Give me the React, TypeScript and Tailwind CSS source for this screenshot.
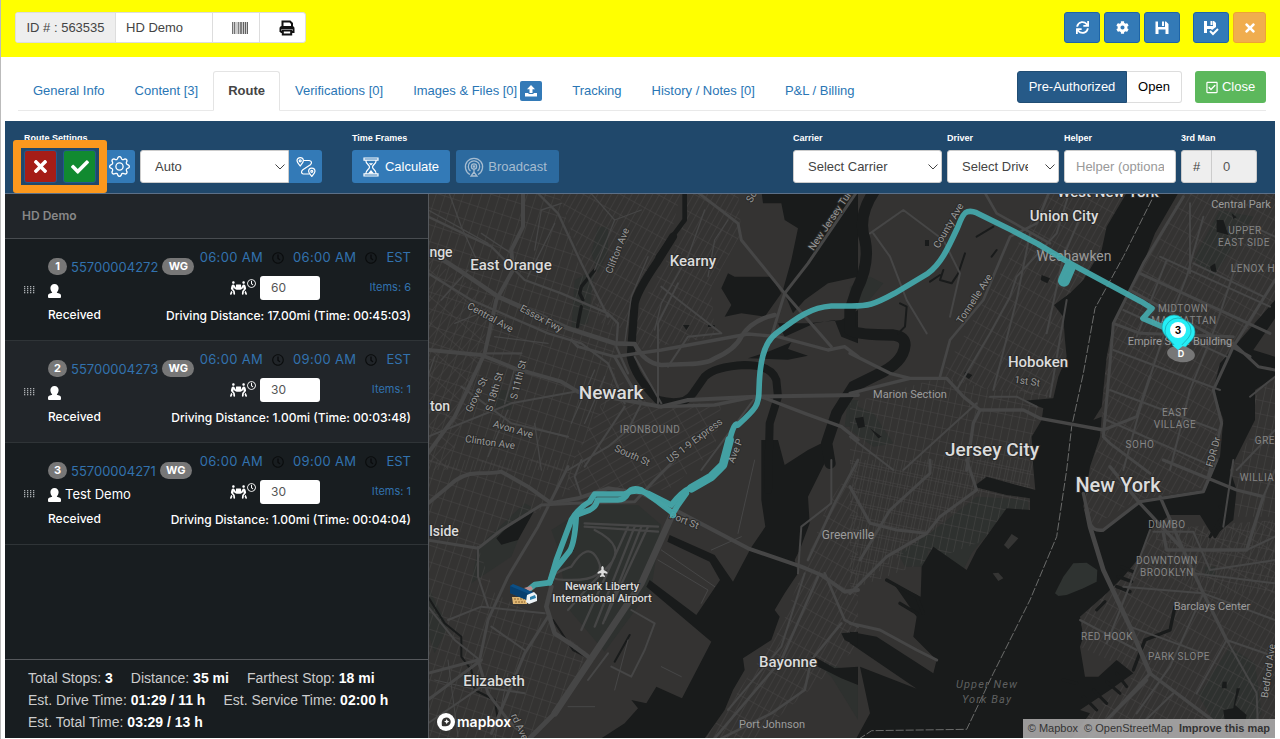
import { useState } from "react";
import type { ReactNode } from "react";
import { FaCheck, FaCog, FaPeopleCarry, FaPlane, FaRegCheckSquare, FaRegClock, FaSync, FaTimes } from "react-icons/fa";
import { BsGear } from "react-icons/bs";

const stops = [
  { n: 1, id: "55700004272", name: "", from: "06:00 AM", to: "06:00 AM", mins: "60", items: 6, drive: "17.00mi (Time: 00:45:03)" },
  { n: 2, id: "55700004273", name: "", from: "06:00 AM", to: "09:00 AM", mins: "30", items: 1, drive: "1.00mi (Time: 00:03:48)" },
  { n: 3, id: "55700004271", name: "Test Demo", from: "06:00 AM", to: "09:00 AM", mins: "30", items: 1, drive: "1.00mi (Time: 00:04:04)" },
];

const summary = [
  [["Total Stops:", "3"], ["Distance:", "35 mi"], ["Farthest Stop:", "18 mi"]],
  [["Est. Drive Time:", "01:29 / 11 h"], ["Est. Service Time:", "02:00 h"]],
  [["Est. Total Time:", "03:29 / 13 h"]],
];

/* ---------- icons ---------- */

function FloppyIcon(props: { check?: boolean }) {
  return (
    <svg className="h-4 w-4" viewBox="0 0 16 16" fill="currentColor">
      {props.check ? (
        <>
          <path d="M1 1h3v5h6V1h1l2 2v4L9 10 8 9H4v4H1z" />
          <path d="M7.500 1h2v4h-2z" />
          <path d="M7 11l3 3 5-5" fill="none" stroke="currentColor" strokeWidth="2" />
        </>
      ) : (
        <>
          <path d="M1.500 1.500H4V7h7V1.500h1l2.500 2.500v10h-3V9.500h-7v4.500h-3z" />
          <path d="M8 1.500h2V6H8z" />
        </>
      )}
    </svg>
  );
}

function BarcodeIcon() {
  return (
    <svg className="h-3 w-4" viewBox="0 0 16 12" fill="#333">
      <path d="M0 0h16v12H0z" opacity=".25" />
      <path d="M0 0h1v12H0zM2 0h1v12H2z" opacity=".6" />
      <path d="M6 0h1v12H6zM8 0h2v12H8z" opacity=".5" />
      <path d="M11 0h1v12h-1zM13 0h1v12h-1zM15 0h1v12h-1z" opacity=".7" />
    </svg>
  );
}

function PrinterIcon() {
  return (
    <svg className="h-4 w-4" viewBox="0 0 16 16" fill="none" stroke="#111" strokeWidth="2">
      <path d="M3.500 7V1.500h7.500l2 2V7" />
      <path d="M1.500 12V8.500Q1.500 7 3 7h10q1.500 0 1.500 1.500V12H12.500M3.500 12h-2" />
      <path d="M3.800 10.500h8.400v4H3.800z" />
      <path d="M2 8h12" />
    </svg>
  );
}

function UploadIcon() {
  return (
    <svg className="h-3 w-3" viewBox="0 0 12 12" fill="currentColor">
      <path d="M6 0l4 4.200H7.500V8h-3V4.200H2zM0 8h3.500v1h5V8H12v3.500H0z" />
    </svg>
  );
}

function RouteIcon() {
  return (
    <svg className="h-5 w-5" viewBox="0 0 20 20" fill="none" stroke="currentColor" strokeWidth="1.200">
      <path d="M4.200 9C2.200 6.500 1 5.200 1 3.800a3.200 3.200 0 016.400 0C7.400 5.200 6.200 6.500 4.200 9z" />
      <circle cx="4.200" cy="3.800" r="1" />
      <path d="M15.800 19.500c-2-2.500-3.200-3.800-3.200-5.200a3.200 3.200 0 016.400 0c0 1.400-1.200 2.700-3.200 5.200z" />
      <circle cx="15.800" cy="14.300" r="1" />
      <path d="M8 3.500h5.200c2.600.5 3 2.500 1.200 4.200l-7.600 5c-2 1.500-1.500 4 .5 4.300L13.500 17" />
    </svg>
  );
}

function HourglassIcon() {
  return (
    <svg className="h-5 w-4" viewBox="0 0 16 20" fill="none" stroke="currentColor" strokeWidth="1.200">
      <path d="M1 1h14v2.200H1zM1 16.800h14V19H1zM2.800 3.200c0 4 3.700 4.300 3.700 6.800s-3.700 2.800-3.700 6.800M13.200 3.200c0 4-3.700 4.300-3.700 6.800s3.700 2.800 3.700 6.800" />
      <path d="M5.800 6.200h4.400L8 8.500zM8 13l3 3.500H5z" fill="currentColor" stroke="none" />
    </svg>
  );
}

function PodcastIcon() {
  return (
    <svg className="h-5 w-5" viewBox="0 0 20 20" fill="none" stroke="currentColor" strokeWidth="1.300">
      <path d="M6 17.500a8.600 8.600 0 118 0" />
      <path d="M6.500 14a5.700 5.700 0 117 0" />
      <circle cx="10" cy="9.500" r="2.600" />
      <circle cx="10" cy="9.500" r=".7" fill="currentColor" />
      <path d="M10 12v3M10 15l-3 4h6z" />
    </svg>
  );
}

function UserIcon() {
  return (
    <svg className="h-[14px] w-[13px] shrink-0" viewBox="0 0 13 14" fill="#fff">
      <path d="M6.500 0C9 0 10.600 1.700 10.600 4c0 1.900-.8 3.300-1.700 4.200v.6l3 1q1.100.5 1.100 1.600v1.600q0 1-1 1H1q-1 0-1-1v-1.600Q0 10.300 1.100 9.800l3-1v-.6C3.200 7.300 2.400 5.900 2.400 4 2.400 1.700 4 0 6.500 0z" />
    </svg>
  );
}

function GripIcon() {
  return (
    <svg className="h-2 w-[11px] shrink-0" viewBox="0 0 11 8" fill="#a9adb0">
      {[0, 3, 6, 9].map((x) => [0, 2, 4, 6].map((y) => <rect key={`${x}-${y}`} x={x} y={y} width="1.300" height="1.300" />))}
    </svg>
  );
}

/* ---------- top of the page ---------- */

function HeaderButton(props: { label: string; warning?: boolean; children: ReactNode }) {
  return (
    <button
      aria-label={props.label}
      className={`flex h-[31px] items-center justify-center rounded-[3px] border text-white ${
        props.warning ? "w-[33px] border-[#eea236] bg-[#f0ad4e]" : "w-9 border-[#1d64a8] bg-[#337ab7]"
      }`}
    >
      {props.children}
    </button>
  );
}

function Header() {
  return (
    <header className="flex h-[57px] items-center justify-between bg-[#ffff00] px-[14px] pb-[2px]">
      <div className="flex h-[31px] items-center overflow-hidden rounded-[3px] border border-[#ddd] bg-white text-[#444]">
        <label htmlFor="order-name" className="flex h-full w-[100px] items-center justify-center border-r border-[#ddd] bg-[#eee]">
          ID # : 563535
        </label>
        <input id="order-name" defaultValue="HD Demo" className="h-full w-[97px] border-r border-[#ddd] px-[10px]" />
        <button aria-label="Barcode" className="flex h-full w-[47px] items-center justify-center border-r border-[#ddd] pl-2">
          <BarcodeIcon />
        </button>
        <button aria-label="Print" className="flex h-full w-[45px] items-center justify-center pl-2">
          <PrinterIcon />
        </button>
      </div>
      <div className="flex gap-[13px]">
        <div className="flex gap-1">
          <HeaderButton label="Refresh"><FaSync className="h-[13px] w-[13px]" /></HeaderButton>
          <HeaderButton label="Settings"><FaCog className="h-[13px] w-[13px]" /></HeaderButton>
          <HeaderButton label="Save"><FloppyIcon /></HeaderButton>
        </div>
        <div className="flex gap-1">
          <HeaderButton label="Save and close"><FloppyIcon check /></HeaderButton>
          <HeaderButton label="Cancel" warning><FaTimes className="h-[14px] w-[14px]" /></HeaderButton>
        </div>
      </div>
    </header>
  );
}

function Tab(props: { label: string; active?: boolean; onSelect: () => void; children?: ReactNode }) {
  return (
    <a
      href="#"
      onClick={props.onSelect}
      className={`-mb-px flex h-[40px] items-center gap-[3px] rounded-t-[3px] border px-[14px] ${
        props.active ? "border-[#e4e4e4] border-b-white bg-white font-bold text-[#444]" : "border-transparent text-[#2a76b5]"
      }`}
    >
      {props.label}
      {props.children}
    </a>
  );
}

const tabs = [
  "General Info",
  "Content [3]",
  "Route",
  "Verifications [0]",
  "Images & Files [0]",
  "Tracking",
  "History / Notes [0]",
  "P&L / Billing",
];

function TabBar() {
  const [active, setActive] = useState("Route");

  return (
    <div className="flex justify-between pt-[14px] pr-[14px] pl-[17px]">
      <nav className="flex flex-1 border-b border-[#e9e9e9]">
        {tabs.map((tab) => (
          <Tab key={tab} label={tab} active={tab === active} onSelect={() => setActive(tab)}>
            {tab.startsWith("Images") && (
              <span className="flex h-5 w-[22px] items-center justify-center rounded-[2px] bg-[#337ab7] text-white">
                <UploadIcon />
              </span>
            )}
          </Tab>
        ))}
      </nav>
      <div className="flex gap-[13px] border-b border-[#e9e9e9] pb-[7px]">
        <div className="flex h-8">
          <button className="w-[110px] rounded-l-[3px] border border-[#204d74] bg-[#265a88] text-white">Pre-Authorized</button>
          <button className="w-[55px] rounded-r-[3px] border border-l-0 border-[#ddd] text-black">Open</button>
        </div>
        <button className="flex h-8 w-[71px] items-center justify-center gap-1 rounded-[3px] bg-[#5cb85c] text-white">
          <FaRegCheckSquare className="h-[13px] w-3" />
          Close
        </button>
      </div>
    </div>
  );
}

/* ---------- route toolbar ---------- */

function Field(props: { label: string; htmlFor?: string; children: ReactNode }) {
  return (
    <div className="flex flex-col gap-[6px]">
      <label htmlFor={props.htmlFor} className="text-[9px] leading-3 font-bold text-white">
        {props.label}
      </label>
      <div className="flex">{props.children}</div>
    </div>
  );
}

function Dropdown(props: { id: string; value: string; className: string }) {
  return (
    <div className={`relative ${props.className}`}>
      <select id={props.id} className="h-[33px] w-full appearance-none rounded-[inherit] border border-[#ccc] bg-white pr-[30px] pl-[14px] text-[#444]">
        <option>{props.value}</option>
      </select>
      <svg className="pointer-events-none absolute top-[14px] right-1 h-[6px] w-[10px]" viewBox="0 0 10 6" fill="none" stroke="#444">
        <path d="M.500.500L5 5 9.500.500" />
      </svg>
    </div>
  );
}

function Toolbar() {
  return (
    <div className="mt-[10px] mr-[5px] ml-1 flex h-[73px] items-start border-b border-[#5c7088] bg-[#20486b] pt-[11px] pr-[18px] pl-[19px]">
      <Field label="Route Settings" htmlFor="mode">
        <div className="relative mr-1 flex gap-[6px]">
          <button aria-label="Discard" className="flex h-[33px] w-[33px] items-center justify-center rounded-[3px] border border-[#23588c] bg-[#a51d17] text-white">
            <FaTimes className="h-[19px] w-[19px]" />
          </button>
          <button aria-label="Apply" className="flex h-[33px] w-[33px] items-center justify-center rounded-[3px] border border-[#23588c] bg-[#118a30] text-white">
            <FaCheck className="h-[18px] w-[18px]" />
          </button>
          <div className="pointer-events-none absolute -inset-x-[11px] -inset-y-[10px] z-10 rounded-[3px] border-8 border-[#fc981d]" />
        </div>
        <button aria-label="Route settings" className="mr-[5px] flex h-[33px] w-[35px] items-center justify-center rounded-r-[3px] bg-[#337ab7] pl-1 text-white">
          <BsGear className="h-[21px] w-[21px]" />
        </button>
        <Dropdown id="mode" value="Auto" className="w-[149px] rounded-l-[3px]" />
        <button aria-label="Optimize route" className="flex h-[33px] w-[33px] items-center justify-center rounded-r-[3px] bg-[#337ab7] text-white">
          <RouteIcon />
        </button>
      </Field>
      <div className="ml-[30px] flex-1">
        <Field label="Time Frames">
          <button className="mr-[6px] flex h-[33px] w-[98px] items-center justify-center gap-[6px] rounded-[3px] bg-[#337ab7] text-white">
            <HourglassIcon />
            Calculate
          </button>
          <button disabled className="flex h-[33px] w-[103px] items-center justify-center gap-1 rounded-[3px] bg-[#2c6a9f] pr-1 text-[#a6bcd0]">
            <PodcastIcon />
            Broadcast
          </button>
        </Field>
      </div>
      <div className="flex gap-[5px]">
        <Field label="Carrier" htmlFor="carrier">
          <Dropdown id="carrier" value="Select Carrier" className="w-[149px] rounded-[3px]" />
        </Field>
        <Field label="Driver" htmlFor="driver">
          <Dropdown id="driver" value="Select Driver" className="w-[112px] rounded-[3px]" />
        </Field>
        <Field label="Helper" htmlFor="helper">
          <input id="helper" placeholder="Helper (optional)" className="h-[33px] w-[112px] rounded-[3px] border border-[#ccc] bg-white px-[11px] placeholder:text-[#999]" />
        </Field>
        <Field label="3rd Man" htmlFor="third">
          <span className="flex h-[33px] w-[31px] items-center justify-center rounded-l-[3px] border border-[#ccc] bg-[#eee] text-[#444]">#</span>
          <input id="third" defaultValue="0" className="h-[33px] w-[45px] rounded-r-[3px] border border-l-0 border-[#ccc] bg-[#eee] px-[11px] text-[#555]" />
        </Field>
      </div>
    </div>
  );
}

/* ---------- stops ---------- */

function StopRow(props: { stop: (typeof stops)[number] }) {
  const { stop } = props;
  return (
    <li className={`flex h-[102px] items-center border-b border-[#2f3437] pr-[17px] pl-[19px] ${stop.n === 2 ? "bg-[#212529]" : "bg-[#181d20]"}`}>
      <GripIcon />
      <div className="ml-[13px] flex w-[100px] flex-col gap-[6px] text-white">
        <div className="flex items-center gap-1 whitespace-nowrap">
          <span className="flex h-[17px] w-[19px] shrink-0 items-center justify-center rounded-full bg-[#777] text-[11px] font-bold">{stop.n}</span>
          <a href="#" className="text-[13px] leading-5 text-[#3272ae]">{stop.id}</a>
          <span className="flex h-[17px] w-8 shrink-0 items-center justify-center rounded-full bg-[#777] text-[11px] font-bold">WG</span>
        </div>
        <div className="flex h-4 items-center gap-1 whitespace-nowrap">
          <UserIcon />
          {stop.name}
        </div>
        <div className="mt-[2px] text-[12px] leading-4 font-medium">Received</div>
      </div>
      <div className="flex flex-1 flex-col items-end pb-2 text-[#3272ae]">
        <div className="flex h-5 items-center gap-[9px] text-[13px] whitespace-nowrap">
          <a href="#" className="tracking-wide">{stop.from}</a>
          <FaRegClock className="h-3 w-3 text-[#0a0c0d]" />
          <a href="#" className="tracking-wide">{stop.to}</a>
          <FaRegClock className="h-3 w-3 text-[#0a0c0d]" />
          <span>EST</span>
        </div>
        <div className="mt-2 flex h-6 items-center">
          <FaPeopleCarry className="h-4 w-[17px] text-white" />
          <FaRegClock className="mb-2 h-[9px] w-[9px] text-white" />
          <input aria-label="Service minutes" defaultValue={stop.mins} className="ml-1 h-6 w-[60px] rounded-[3px] bg-white px-[11px] text-[12px] text-[#555]" />
          <span className="w-[91px] text-right text-[11px]">Items: {stop.items}</span>
        </div>
        <div className="mt-2 text-[12px] leading-4 font-medium whitespace-nowrap text-white">Driving Distance: {stop.drive}</div>
      </div>
    </li>
  );
}

function StopsPanel() {
  return (
    <section className="flex w-[424px] shrink-0 flex-col border-r border-[#55585c] bg-[#181d20]">
      <h2 className="flex h-[45px] items-center border-b border-[#484c50] bg-[#212529] pl-[17px] font-[Inter,sans-serif] text-[12px] font-semibold text-[#888]">
        HD Demo
      </h2>
      <ul className="flex-1 font-[Inter,sans-serif] text-[13px]">
        {stops.map((stop) => (
          <StopRow key={stop.n} stop={stop} />
        ))}
      </ul>
      <div className="border-t border-[#55585c] pt-[7px] pb-[5px] pl-[23px] text-[14px] leading-[22px] text-[#ccc]">
        {summary.map((line, i) => (
          <p key={i} className="flex gap-[18px]">
            {line.map(([label, value]) => (
              <span key={label}>
                {label} <b className="text-white">{value}</b>
              </span>
            ))}
          </p>
        ))}
      </div>
    </section>
  );
}

/* ---------- map ---------- */

// Every tile is drawn at three units per pixel.
const NW = "translate(0 0)";
const NE = "translate(1266 0)";
const SW = "translate(0 810)";
const SE = "translate(1266 810)";

const grids = [
  { id: "a", angle: 18, w: 26, h: 48 },
  { id: "b", angle: 29, w: 18, h: 54 },
  { id: "c", angle: 40, w: 24, h: 60 },
  { id: "d", angle: 12, w: 22, h: 40 },
  { id: "e", angle: 60, w: 24, h: 62 },
];

const blocks = [
  { at: NW, grid: "a", d: "M0 0H390L460 250 560 400 560 600 420 840H0z" },
  { at: NW, grid: "c", d: "M0 200L190 330 160 500 60 840H0z" },
  { at: NW, grid: "b", d: "M390 0H760L730 130 610 320 600 420 520 400z" },
  { at: NW, grid: "b", d: "M770 0H930L940 130 850 290 860 440 620 480 620 380 760 130z" },
  { at: NW, grid: "e", d: "M420 840L560 560 620 600 680 640 880 640 860 780 720 900 420 900z" },
  { at: NE, grid: "b", d: "M480 200L600 0H830L700 280 640 360 640 480 600 620 420 600 270 560z" },
  { at: NE, grid: "d", d: "M420 600L610 600 560 660 545 1000 0 1200V640L280 560z" },
  { at: NE, grid: "b", d: "M1000 0H1275V340L1160 450 1100 560 1120 700 1070 890 860 930 710 1020 690 950 750 740 775 420 900 190z" },
  { at: NE, grid: "d", d: "M1275 560L1215 620 1200 740 1140 850 1150 980H1275z" },
  { at: SW, grid: "a", d: "M0 0H470L420 100 150 260 200 400 350 480 480 580 380 770 300 835H0z" },
  { at: SW, grid: "b", d: "M1290 0L1200 130 1060 500 900 740 830 835H980L1290 560z" },
  { at: SE, grid: "d", d: "M0 0H540V90L370 100 240 220 0 400z" },
  { at: SE, grid: "b", d: "M900 210L1275 180V835H640L860 640 690 560 690 470z" },
  { at: SE, grid: "d", d: "M900 210L1275 180V400L1030 400z" },
];

const parks = [
  { at: NW, d: "M510 110l30 0 0 80-30 60-20-60zM440 270l60-30-20 160-50 20zM200 600h50v60h-50zM1260 630h30v80h-40z" },
  { at: NE, d: "M0 290l60-30 40 20-50 60H0zM1110 60l100 20-120 180-60-50zM0 640l70 30 60 90-60 10L0 720z" },
  { at: SW, d: "M150 260l140-130 20 10-60 150-120 80zM370 210l120-75 140 0 70 60-30 190-140 190-110-130-30-180zM0 380l60 120-40 80-20-60zM1160 600l130 40v140l-80-130z" },
  { at: SE, d: "M240 220l140-110 155 10 0 35-80 15-90 110-30 60-60-50-40-20-10 50-60 0-20-40z" },
  { at: SE, d: "M1140 560l75 50 20 150-50 75-70-10-70-120zM1065 320h30v30h-30z" },
];

const water = [
  // Hudson, Upper Bay and East River
  {
    at: NE,
    d: "M835 0L770 110 755 180 700 270 660 310 612 345 640 380 645 450 650 500 625 560 610 625 520 632 580 655 575 690 545 740 548 810 556 900 500 885 410 860 370 890 470 915 540 925 540 960 470 955 380 1080 350 1140 250 1070 215 1130 212 1220 130 1180 200 1280 190 1340 260 1410 250 1450 80 1340 0 1325V1360L220 1510 210 1500 30 1430 60 1570 0 1680H640L720 1570 690 1560 780 1500 850 1450 800 1410 745 1460 705 1460 690 1370 700 1340 690 1280 770 1210 820 1160 870 1100 900 1020 960 975 1050 975 1090 1040 1150 990 1160 900 1140 840 1180 760 1215 690 1215 600 1275 560V500L1210 480 1275 385V330L1170 450 1110 520 1090 600 1120 690 1110 800 1060 900 870 930 760 1025 725 1020 700 950 720 830 750 740 755 680 730 690 755 650 770 500 790 400 840 310 880 220 915 130 990 0z",
  },
  // Newark Bay
  {
    at: SW,
    d: "M1000-60V0L1000 120 1012 200 970 262 915 365 860 285 725 225 718 245 845 305 876 360 805 465 665 360 655 380 850 545 762 715 685 680 655 730 610 720 630 745 590 790 520 835H830L890 750 915 690 950 630 945 595 1030 540 1055 470 1040 450 1070 400 1110 340 1100 300 1115 270 1145 190 1140 110 1190 10 1200-60 1140-30 1070 15 1050-60z",
  },
  { at: NW, d: "M1000 0H1290V260L1200 280 1130 330 1095 370 1065 300 1090 210 1110 115 1070 90 1060 40 1005 40z" },
  { at: NW, d: "M900 250l20 10 110 0 30 50-50 70-70-10-50 10 20-35-30-50zM960 505l60-20 70-28-10 20 60 20-60 12zM1050 400l90 0 100-10 50-30v100l-50-20-20-50-60 10-90 40zM765 405h20l-10 15zM840 405h20v6h-20z" },
  { at: SW, d: "M205 235l40-40 75-45-50 90-50 14zM1150 585l70 40 70-5v55l-50-20-80-40zM1240 520l50-5v45l-40-20z" },
  { at: NE, d: "M1100 90l20 0 15 45-35-10zM1145 70l15 12-10 5zM1080 230l15-10 5 25-15 0zM575 255l25 10-8 15-20-10zM345 545l22 10-10 12-15-10zM225 150h12v18h-12zM40 680l-25 5 10 30 20-5zM60 715l35 25-10 5z" },
  { at: SE, d: "M1118 665l12 0 0 20-15 0zM1120 750l30-5 10-60 10 0-15 50 35 30-10 45-50 15z" },
];

const rivers = [
  { at: NW, w: 14, d: "M770 0V90L740 130 690 200" },
  { at: NW, w: 24, d: "M735 140L685 220Q630 300 620 340L608 500Q620 560 690 630Q770 650 795 610L830 560Q860 530 950 525Q1030 525 1045 570L1050 620 1025 700 1020 900" },
  { at: NE, w: 34, d: "M75 0Q20 80 45 150Q60 220 20 300L0 360V420Q20 435 130 435 165 440 165 465 160 520 80 555L10 590-40 670-70 760-60 820" },
  { at: NW, w: 10, d: "M500 240L460 290 455 310 465 330M460 350L448 410" },
  { at: NE, w: 6, d: "M430 110l-50 30M440 180l-15 20M280 240l-10 30 35 10 20-30 20-60M240 275l30-20M150 340l20 10-5 60-20 20" },
  { at: SW, w: 6, d: "M0 410l50 80 50 40 0 60 30 40 10 60 60 30 10 60M445 180l-10 90M375 480l60 90 60 30M605 525l-45 80" },
  { at: SE, w: 10, d: "M850 630L885 540 960 510 975 440M800 380l40 15M805 350l40 15M815 320l35 15M640 660l40 10M110 360l90 50 20 50M150 430l50 30" },
  { at: SE, w: 9, d: "M700 710l40 40M730 690l40 40M770 665l40 35M800 640l30 40M1080 230l30-50M1095 230l30-50M1110 140l20 30M740 450l25-25" },
];

const roads = [
  { at: NW, w: 14, d: "M0 180L100 245 210 320 300 360 420 415 560 460 620 462Q650 520 700 525L780 522Q840 520 860 505Q920 480 940 440 970 390 1040 375" },
  { at: NW, w: 12, d: "M285 0L285 110 250 180 255 240 205 330 170 490 80 680 0 790M0 480L160 495 260 535 400 575 450 605 700 650 780 630 980 620 1290 615" },
  { at: NW, w: 10, d: "M700 650L860 645 980 620M1000 620L1130 670 1240 710 1290 750M560 500L700 480 960 432 1050 440 1200 480 1250 470 1290 500" },
  { at: NW, w: 9, d: "M1290 0L1140 220 1070 310 1030 440M800 0L930 100 940 150 1070 310 1210 470M430 450L450 470 560 500 640 640" },
  { at: NW, w: 7, d: "M0 80L190 170 290 270 400 310 540 370 570 400 565 470 600 550M0 250L130 330 360 430M320 0L390 70 460 220 540 380M280 490L170 490M360 430L460 460 540 520 590 640" },
  { at: NW, w: 6, d: "M0 740L250 640 440 605M100 590L250 700 420 740M640 640L600 720 540 770 420 840M590 650L470 830M720 530L780 440 880 430 700 290M690 640V400L750 280M620 500L700 640M820 840L980 625" },
  { at: NW, w: 4, d: "M0 60L180 160M60 0L100 110 160 240M320 180L340 60 400 40M250 190L160 130M380 100L300 260M480 0L560 90 640 60M560 90L500 240M660 200L610 320 590 460M830 60L780 200 700 340 680 420M900 90L860 150 840 260M20 500L0 560M200 440L360 460M260 535L230 640M320 700L340 840M180 800L240 660M500 540L430 700M530 560L470 700M40 330L120 240M80 400L180 360" },
  { at: NE, w: 10, d: "M0 490L120 550 180 565 290 565 340 620 390 660 520 660 570 685 760 720M0 610L180 565M390 660L370 700 350 840" },
  { at: NE, w: 8, d: "M600 0L560 100 480 140 400 330 300 450 270 560M400 0L440 70 600 160" },
  { at: NE, w: 6, d: "M60 130L160 60 280 150 330 250 300 380M70 130L120 200 170 330 230 430M660 0L620 130 500 260 480 320 420 430 320 600M540 130L500 330 430 600M700 60L640 200 590 430M420 620L500 620 560 650M160 840L380 640M0 740L130 840M650 330L600 620" },
  { at: NE, w: 9, d: "M1000 20L880 220 790 400 780 520 760 740 780 760 900 850M790 400L870 430 1150 440M840 300L1200 500M870 250L1260 430M760 720L860 680 900 560M1275 270L1150 470 1090 600 1115 700 1075 860M1150 460L1225 530 1275 540" },
  { at: NE, w: 6, d: "M1020 40V250M1060 80L1010 260 940 440 880 620 820 840M1160 220L1100 400 1020 600 960 840M930 200L1260 350M820 360L1130 500M790 480L1110 600M780 600L1100 720M770 690L1090 830M1210 110L1275 140M1030 220L1240 320M950 210L860 440M1200 620L1275 560M1275 720L1160 840" },
  { at: SW, w: 12, d: "M0 130L60 80Q100 40 150 40T220 35L300 80 370 130 450 115 540 85 640 100 750 155 960 265 1120 320 1180 345 1250 395 1290 390" },
  { at: SW, w: 20, d: "M730 170L640 370 540 520 480 610 380 760" },
  { at: SW, w: 14, d: "M370 380L355 440 380 520 440 560 480 590M380 760L330 810 300 840" },
  { at: SW, w: 9, d: "M0 240L150 265 220 210 340 135 440 130 620 125 680 60 740 0M360 470L290 580 190 820M155 600L180 480 240 350 330 200 420 20M0 640L150 600 180 700 240 780 300 840M0 720L160 600" },
  { at: SW, w: 6, d: "M0 440L80 540 155 600M60 480L160 440 350 460M190 500L290 570M460 0L440 50 460 110M0 790L160 680 290 700M150 260V350L180 440M610 450L680 490 650 570 610 650 550 620M480 660L540 580M1110 340L1120 200 1210 130 1210 0M1130 340L1060 560 900 750" },
  { at: SW, w: 3, d: "M700 270L860 380M930 220L980 0M690 300L840 390 820 430M850 270L940 230M600 540L560 690M700 620L760 650M20 660L150 690M60 600L90 830M240 640L200 840M500 740L420 740" },
  { at: SW, w: 7, d: "M470 200L690 215M470 190L690 200M620 200L500 500M640 200L525 490M600 200L460 510M660 200L530 480M430 320Q480 240 510 300T430 360 430 320M500 210Q600 260 540 320T420 450" },
  { at: SW, w: 8, d: "M1190 340L1250 480 1290 500M1240 490L1150 600 1130 690 1030 760 880 835M1290 0L1220 130 1140 300M1170 350L1060 600 860 835" },
  { at: SE, w: 9, d: "M350 0L380 90 270 170 230 220 110 290 0 400M0 80L60 190 140 210 230 220M240 0V40L120 150 30 300M0 490L90 510 200 570 260 600" },
  { at: SE, w: 14, d: "M710 150L720 200 760 330 840 500 900 640" },
  { at: SE, w: 10, d: "M700 100L720 190Q730 215 760 210L870 125 1060 95 1100 0M780 20L870 130 1000 270M930 110L1000 270 1060 400 1130 540M940 0L1160 90 1240 110 1190 270 950 270 940 220M900 640L1100 790 1180 835M900 640L720 835M890 660L690 860" },
  { at: SE, w: 6, d: "M1000 270L1190 270 1275 230M910 215L1030 215 1080 330 1275 300M820 380L1060 400 1275 480M900 210L830 400 770 550M840 500L1060 580M1130 540L1220 700 1225 835M1130 540L1275 590M1130 540L1040 700M1240 110L1275 30M1030 340L1275 370M1060 400L960 620 860 760M690 480L860 570M1120 200L1150 0M970 700L830 835" },
];

const routeStrands = [
  "M305 1196L320 1184 365 1178 385 1110 430 990Q450 955 485 935L500 912H590Q620 895 660 910L730 945Q760 905 790 892T850 860 885 825 905 750 930 705C985 655 993 645 993 600C995 520 1005 460 1045 430C1110 380 1150 352 1210 348H1270C1320 348 1336 345 1400 310L1500 250C1540 220 1560 175 1590 110Q1605 68 1618 65T1645 68L1750 120 1830 162 1930 222 2140 335 2172 355 2145 385 2215 415",
  "M365 1178L380 1140 420 1090Q440 1070 445 975L485 960Q505 950 508 930H570Q590 930 600 910T640 900L690 935 735 970 750 945 775 910",
];

const cities = [
  { t: "East Orange", x: 511, y: 270, s: 15 },
  { t: "Kearny", x: 693, y: 266, s: 15 },
  { t: "Newark", x: 611, y: 399, s: 19 },
  { t: "Union City", x: 1064, y: 221, s: 15 },
  { t: "West New York", x: 1108, y: 197, s: 15 },
  { t: "Hoboken", x: 1038, y: 367, s: 15 },
  { t: "Jersey City", x: 992, y: 456, s: 19 },
  { t: "New York", x: 1118, y: 492, s: 20 },
  { t: "Bayonne", x: 788, y: 667, s: 15 },
  { t: "Elizabeth", x: 494, y: 686, s: 15 },
  { t: "nge", x: 441, y: 257, s: 14 },
  { t: "ton", x: 440, y: 411, s: 14 },
  { t: "lside", x: 444, y: 536, s: 14 },
];

const places = [
  { t: "Weehawken", x: 1074, y: 261, s: 14 },
  { t: "Central Park", x: 1241, y: 208, s: 11 },
  { t: "Marion Section", x: 910, y: 398, s: 11 },
  { t: "Greenville", x: 848, y: 539, s: 12 },
  { t: "Port Johnson", x: 772, y: 728, s: 11 },
  { t: "Barclays Center", x: 1212, y: 610, s: 11 },
  { t: "Empire State Building", x: 1180, y: 345, s: 11 },
];

const districts = [
  { t: "IRONBOUND", x: 650, y: 433 },
  { t: "UPPER", x: 1245, y: 234 },
  { t: "EAST SIDE", x: 1244, y: 246 },
  { t: "LENOX H", x: 1253, y: 272 },
  { t: "MIDTOWN", x: 1183, y: 312 },
  { t: "MANHATTAN", x: 1184, y: 324 },
  { t: "EAST", x: 1175, y: 416 },
  { t: "VILLAGE", x: 1175, y: 428 },
  { t: "SOHO", x: 1140, y: 448 },
  { t: "GREE", x: 1268, y: 444 },
  { t: "WILLIA", x: 1257, y: 481 },
  { t: "DUMBO", x: 1167, y: 528 },
  { t: "DOWNTOWN", x: 1167, y: 564 },
  { t: "BROOKLYN", x: 1167, y: 576 },
  { t: "RED HOOK", x: 1107, y: 640 },
  { t: "PARK SLOPE", x: 1179, y: 660 },
];

const streets = [
  { t: "Clifton Ave", x: 618, y: 251, r: -68 },
  { t: "Central Ave", x: 490, y: 318, r: 29 },
  { t: "Essex Fwy", x: 541, y: 319, r: 28 },
  { t: "Grove St", x: 477, y: 395, r: -64 },
  { t: "S 18th St", x: 495, y: 392, r: -74 },
  { t: "S 11th St", x: 519, y: 380, r: -76 },
  { t: "Avon Ave", x: 513, y: 430, r: 16 },
  { t: "Clinton Ave", x: 490, y: 443, r: 8 },
  { t: "South St", x: 632, y: 456, r: 24 },
  { t: "US 1-9 Express", x: 695, y: 441, r: -37 },
  { t: "Ave P", x: 736, y: 451, r: -68 },
  { t: "New Jersey Turn", x: 832, y: 219, r: -56 },
  { t: "Sc", x: 752, y: 197, r: -60 },
  { t: "County Ave", x: 949, y: 226, r: -60 },
  { t: "Tonnelle Ave", x: 975, y: 299, r: -57 },
  { t: "1st St", x: 1027, y: 382, r: 8 },
  { t: "Port St", x: 684, y: 521, r: 22 },
  { t: "FDR Dr", x: 1214, y: 452, r: -75 },
  { t: "rd Ave", x: 519, y: 727, r: 65 },
  { t: "Bedford Ave", x: 1269, y: 671, r: -82 },
];

function Labels() {
  return (
    <g textAnchor="middle" className="font-[Roboto,sans-serif]">
      <g fill="#999" fontSize="10" stroke="#2b2b2a" strokeWidth="2" paintOrder="stroke">
        {streets.map((l) => (
          <text key={l.t} x={l.x} y={l.y} transform={`rotate(${l.r} ${l.x} ${l.y})`} dominantBaseline="middle">{l.t}</text>
        ))}
      </g>
      <g fill="#858585" className="text-[10px] tracking-wider">
        {districts.map((l) => (
          <text key={l.t} x={l.x} y={l.y}>{l.t}</text>
        ))}
        <g className="tracking-widest italic" fill="#5f6060" fontSize="11">
          <text x="987" y="688">Upper New</text>
          <text x="987" y="703">York Bay</text>
        </g>
      </g>
      <g fill="#9c9c9c">
        {places.map((l) => (
          <text key={l.t} x={l.x} y={l.y} fontSize={l.s}>{l.t}</text>
        ))}
      </g>
      <g fill="#dcdcdc" fontWeight="500" stroke="#2b2b2a" strokeWidth="2" paintOrder="stroke">
        {cities.map((l) => (
          <text key={l.t} x={l.x} y={l.y} fontSize={l.s}>{l.t}</text>
        ))}
        <text x="602" y="590" fontSize="11">Newark Liberty</text>
        <text x="602" y="602" fontSize="11">International Airport</text>
      </g>
    </g>
  );
}

function Markers() {
  return (
    <>
      <g transform="translate(509 584)">
        <path d="M3 13h15v7H4z" fill="#dfb673" />
        <path d="M5 15h10M6 18h10" stroke="#8a6330" strokeWidth="1" strokeDasharray="2 1" />
        <path d="M1 2L4 0 24 8V16L20 17 1 9z" fill="#0b4f86" />
        <path d="M1 2L20 10V17L1 9z" fill="#083f6e" />
        <path d="M18 11l7-3 3 3v6l-8 3-3-2z" fill="#eef3f6" />
        <path d="M21 13l5-2 1 3-6 2z" fill="#2d82ad" />
        <path d="M15 4l7-2 2 3-3 2z" fill="#b98d8d" />
      </g>
      <g fill="#25eef6" stroke="#1a9ea3" strokeWidth=".7">
        <path d="M1173 345c-4-7-11-10-11-18a12 12 0 0124 0c0 8-7 11-11 18z" />
        <path d="M1183 348c-4-6-10-9-10-16a11 11 0 0122 0c0 7-6 10-10 16z" />
        <path d="M1178 350c-5-8-13-12-13-19a13 13 0 0126 0c0 7-8 11-13 19z" />
      </g>
      <circle cx="1178" cy="330" r="8" fill="#fff" />
      <ellipse cx="1181" cy="354" rx="14" ry="8" fill="#777" transform="rotate(8 1181 354)" />
      <path d="M1172 345h12l-6 5z" fill="#25eef6" />
      <g textAnchor="middle" fontWeight="700" fontSize="10" className="font-[Inter,sans-serif]">
        <text x="1178" y="334">3</text>
        <text x="1181" y="357" fontSize="9" fill="#fff">D</text>
      </g>
    </>
  );
}

function RouteMap() {
  return (
    <section aria-label="Route map" className="relative flex-1 overflow-hidden bg-[#343332]">
      <svg className="absolute inset-0 h-full w-full" viewBox="429 194 846 544" preserveAspectRatio="xMidYMid slice">
        <defs>
          {grids.map((g) => (
            <pattern key={g.id} id={`grid-${g.id}`} width={g.w} height={g.h} patternUnits="userSpaceOnUse" patternTransform={`rotate(${g.angle})`}>
              <path d={`M0 0V${g.h}M0 0H${g.w}`} stroke="#474645" strokeWidth="3" fill="none" />
            </pattern>
          ))}
        </defs>
        <g transform="translate(428 190) scale(0.33333)" fill="none" strokeLinejoin="round" strokeLinecap="round">
          {parks.map((p) => <path key={p.d} transform={p.at} d={p.d} fill="#2e312f" />)}
          {blocks.map((b) => <path key={b.d} transform={b.at} d={b.d} fill={`url(#grid-${b.grid})`} />)}
          {water.map((w) => <path key={w.d} transform={w.at} d={w.d} fill="#191b1b" />)}
          {rivers.map((r) => <path key={r.d} transform={r.at} d={r.d} stroke="#191b1b" strokeWidth={r.w} />)}
          <g transform={SE}>
            <path d="M615 400L640 350 670 310 710 308 742 330 740 365 700 385 650 405 625 408z" fill="#2f3331" />
            <path d="M462 255L485 222 505 235 475 268zM428 340L445 338 460 355 445 363z" fill="#353534" />
          </g>
          <path transform={NE} d="M905 30L820 200 735 355 700 550 665 710 650 840 620 1040 540 1230 430 1450 350 1618 65 1622 30 1645" stroke="#6b6c6b" strokeWidth="3" strokeDasharray="22 8" />
          {roads.map((r) => <path key={r.d} transform={r.at} d={r.d} stroke="#464646" strokeWidth={r.w} />)}
        </g>
        <Labels />
        <g transform="translate(428 190) scale(0.33333)" fill="none" stroke="#45a9ac" strokeLinejoin="round" strokeLinecap="round" opacity=".93">
          {routeStrands.map((d) => <path key={d} d={d} strokeWidth="17" />)}
          <path d="M790 895L850 860 885 825 905 750" strokeWidth="26" />
          <path d="M1925 232L1908 272" strokeWidth="36" />
          <circle cx="735" cy="975" r="7" strokeWidth="5" />
        </g>
        <FaPlane x="597" y="567" size="11" color="#ddd" transform="rotate(-90 602 572)" />
        <Markers />
      </svg>
      <a href="#" className="absolute bottom-[6px] left-2 flex items-center gap-[2px] font-[Inter,sans-serif] text-[14px] leading-5 font-semibold text-white">
        <svg className="h-[18px] w-[18px]" viewBox="0 0 18 18">
          <circle cx="9" cy="9" r="9" fill="#fff" />
          <path d="M5 13C4 8 5.500 4.500 9.500 4.500a4.200 4.200 0 014.200 4.200C13.700 12.500 9.500 14 5 13z" fill="#343332" />
          <path d="M9.700 6l.8 1.800 1.800.8-1.800.8-.8 1.800-.8-1.800-1.800-.8 1.800-.8z" fill="#fff" />
        </svg>
        mapbox
      </a>
      <div className="absolute right-0 bottom-0 flex h-[19px] items-center gap-[6px] bg-[#aaa9a9]/90 px-[5px] text-[11px] text-[#333]">
        <a href="#">© Mapbox</a>
        <a href="#">© OpenStreetMap</a>
        <a href="#" className="font-bold">Improve this map</a>
      </div>
    </section>
  );
}

export default function App() {
  return (
    <main className="flex min-h-screen flex-col border-l border-[#bbb] bg-white pb-px font-['Liberation_Sans',Arial,sans-serif] text-[13px]">
      <Header />
      <TabBar />
      <Toolbar />
      <div className="mr-[5px] ml-1 flex flex-1">
        <StopsPanel />
        <RouteMap />
      </div>
    </main>
  );
}
